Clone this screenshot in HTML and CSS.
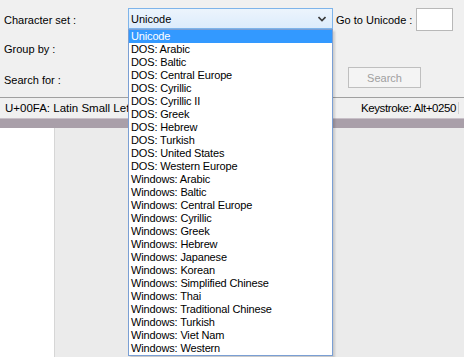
FILE: index.html
```html
<!DOCTYPE html>
<html>
<head>
<meta charset="utf-8">
<link rel="stylesheet" href="styles.css">
</head>
<body>
<div class="app">
  <div class="form">
    <div class="row row1">
      <span class="label lbl-charset">Character set :</span>
      <div class="select">
        <span class="select-text">Unicode</span>
        <svg class="chev" width="8" height="6" viewBox="0 0 8 6"><path d="M0.5 1 L4 4.5 L7.5 1" fill="none" stroke="#3a3a3a" stroke-width="1.6"/></svg>
      </div>
      <span class="label lbl-goto">Go to Unicode :</span>
      <div class="input"></div>
    </div>
    <div class="row row2">
      <span class="label">Group by :</span>
    </div>
    <div class="row row3">
      <span class="label lbl-search">Search for :</span>
      <div class="btn">Search</div>
    </div>
  </div>
  <div class="status">
    <span class="status-left">U+00FA: Latin Small Letter U With Acute</span>
    <span class="status-right">Keystroke: Alt+0250</span>
  </div>
  <div class="band"></div>
  <div class="bottom">
    <div class="pane-white"></div>
    <div class="pane-grey"></div>
  </div>

  <ul class="list">
    <li class="sel">Unicode</li>
    <li>DOS: Arabic</li>
    <li>DOS: Baltic</li>
    <li>DOS: Central Europe</li>
    <li>DOS: Cyrillic</li>
    <li>DOS: Cyrillic II</li>
    <li>DOS: Greek</li>
    <li>DOS: Hebrew</li>
    <li>DOS: Turkish</li>
    <li>DOS: United States</li>
    <li>DOS: Western Europe</li>
    <li>Windows: Arabic</li>
    <li>Windows: Baltic</li>
    <li>Windows: Central Europe</li>
    <li>Windows: Cyrillic</li>
    <li>Windows: Greek</li>
    <li>Windows: Hebrew</li>
    <li>Windows: Japanese</li>
    <li>Windows: Korean</li>
    <li>Windows: Simplified Chinese</li>
    <li>Windows: Thai</li>
    <li>Windows: Traditional Chinese</li>
    <li>Windows: Turkish</li>
    <li>Windows: Viet Nam</li>
    <li>Windows: Western</li>
  </ul>
</div>
</body>
</html>
```

FILE: styles.css
```css
html, body {
  margin: 0;
  padding: 0;
  background: #f0f0f0;
}
.app {
  position: relative;
  width: 464px;
  height: 357px;
  overflow: hidden;
  font-family: "Liberation Sans", Arial, sans-serif;
  font-size: 11px;
  color: #000;
  background: #f0f0f0;
}
.form {
  height: 89px;
  padding: 8px 0 0 4px;
}
.row {
  display: flex;
  align-items: center;
}
.row1 {
  height: 23px;
}
.row2 {
  height: 22px;
  margin-top: 7px;
}
.row3 {
  height: 21px;
  margin-top: 7px;
}
.label {
  white-space: nowrap;
}
.lbl-charset {
  width: 124px;
}
.select {
  box-sizing: border-box;
  width: 205px;
  height: 21px;
  align-self: flex-start;
  border: 1px solid #7eb4ea;
  background: linear-gradient(#ecf4fc, #dcecfc);
  display: flex;
  align-items: center;
  padding-left: 2px;
  padding-right: 6px;
}
.select-text {
  flex: 1;
}
.chev {
  display: block;
}
.lbl-goto {
  margin-left: 3px;
  width: 80px;
}
.input {
  box-sizing: border-box;
  width: 37px;
  height: 23px;
  border: 1px solid #b8b8b8;
  background: #fff;
}
.lbl-search {
  width: 344px;
  padding-top: 5px;
}
.btn {
  box-sizing: border-box;
  width: 73px;
  height: 21px;
  border: 1px solid #bfbfbf;
  background: #f4f4f4;
  color: #a0a0a0;
  display: flex;
  align-items: center;
  justify-content: center;
}
.status {
  box-sizing: border-box;
  height: 21px;
  border-top: 1px solid #a0a0a0;
  display: flex;
  align-items: center;
  justify-content: space-between;
  padding: 1px 5px 1px 5px;
  font-size: 11.5px;
}
.status-left {
  white-space: nowrap;
  overflow: hidden;
  width: 123px;
  flex: none;
}
.status-right {
  white-space: nowrap;
  letter-spacing: -0.4px;
  border-right: 1px solid #d0d0d0;
  padding-right: 2px;
}
.band {
  height: 9px;
  background: #a99fa9;
  border-top: 1px solid #c8c0c8;
}
.bottom {
  display: flex;
  height: 229px;
}
.pane-white {
  width: 54px;
  background: #fff;
  border-right: 1px solid #d6d6d6;
}
.pane-grey {
  flex: 1;
  background: #ebebeb;
}
.list {
  position: absolute;
  left: 128px;
  top: 29px;
  width: 203px;
  margin: 0;
  padding: 0;
  list-style: none;
  background: #fff;
  border: 1px solid #7a9fd4;
  box-shadow: 2px 2px 2px rgba(0,0,0,0.15);
}
.list li {
  height: 13px;
  line-height: 13px;
  padding-left: 2px;
  white-space: nowrap;
  letter-spacing: -0.15px;
}
.list li.sel {
  background: #3399ff;
  color: #fff;
}
```
